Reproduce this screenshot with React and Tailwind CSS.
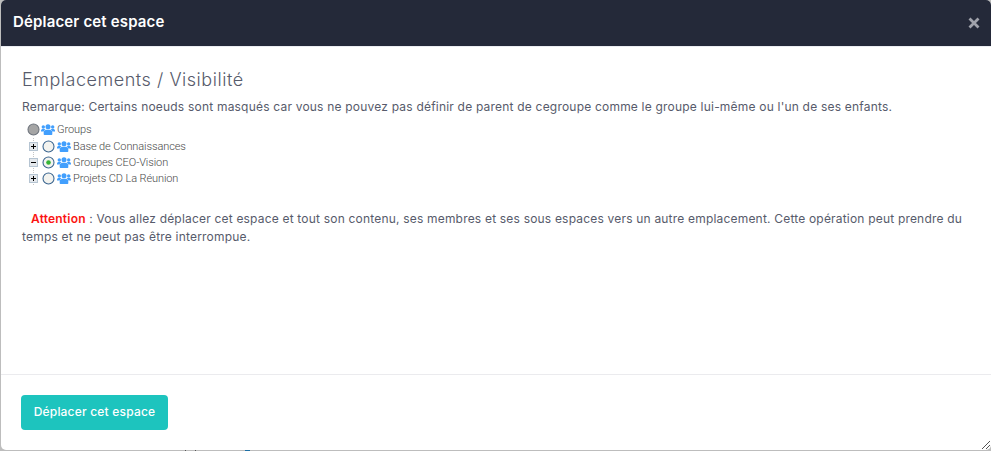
import React from "react";

function UsersIcon() {
  return (
    <svg viewBox="0 0 14 11" className="h-[11px] w-[14px] shrink-0" fill="#429ffd">
      <circle cx="2.3" cy="3" r="1.7" />
      <circle cx="11.7" cy="3" r="1.7" />
      <circle cx="7" cy="2.8" r="2.5" />
      <path d="M0 7.6V6.7C0 5.5.8 5 1.8 5h1.4c.6 0 1 .2 1.3.5C3.500 6 3 6.700 2.800 7.600ZM14 7.600V6.700C14 5.500 13.200 5 12.200 5h-1.400c-.6 0-1 .2-1.300.5 1 .5 1.500 1.200 1.700 2.100Z" />
      <path d="M2.700 9.900V8.600C2.700 6.700 4.200 5.800 5.500 5.800h3c1.300 0 2.800.9 2.800 2.800v1.300c0 .6-.4 1-1 1H3.700c-.6 0-1-.4-1-1Z" />
    </svg>
  );
}

function Radio({ checked, disabled }) {
  return (
    <svg viewBox="0 0 13 13" className="size-[13px] shrink-0">
      <circle cx="6.500" cy="6.500" r="5.500" fill={disabled ? "#a5a5a5" : "#f3f3ef"} stroke={disabled ? "#70767f" : "#3d6791"} strokeWidth="1.100" />
      {checked && <circle cx="6.500" cy="6.500" r="2.300" fill="#36b536" />}
    </svg>
  );
}

function Toggle({ open }) {
  return (
    <svg viewBox="0 0 9 16" className="h-4 w-[9px] shrink-0" shapeRendering="crispEdges">
      <path d="M4.500 0v16" stroke="#c4c4c4" strokeDasharray="1 1" />
      <rect x=".5" y="4.500" width="8" height="8" rx="1" fill="#e4e8ec" stroke="#b5c4d2" />
      <path d={open ? "M2 8.500h5" : "M2 8.500h5M4.500 6v5"} stroke="#000" />
    </svg>
  );
}

function TreeRow({ label, checked, open }) {
  return (
    <li className="flex h-4 items-center">
      <Toggle open={open} />
      <span className="ml-1 flex"><Radio checked={checked} /></span>
      <span className="ml-[2px] flex"><UsersIcon /></span>
      <span className="ml-[2px] pt-px">{label}</span>
    </li>
  );
}

export default function App() {
  return (
    <div className="h-[451px] w-[991px] overflow-hidden bg-[#bdbdbd] pl-px font-['Inter',sans-serif] text-[#575b6b]">
      <section className="relative flex h-[450px] flex-col overflow-hidden rounded-[5px] bg-white">
        <header className="flex h-[46px] shrink-0 items-center justify-between bg-[#242939] pr-[11px] pl-3 text-white">
          <h1 className="-mt-px text-[15px] font-semibold tracking-[0.16px] whitespace-nowrap">Déplacer cet espace</h1>
          <svg viewBox="0 0 12 12" className="size-3" stroke="#a0a2ab" strokeWidth="2.800">
            <path d="M1.500 1.500l9 9M10.500 1.500l-9 9" />
          </svg>
        </header>
        <main className="flex-1 border-t border-[#ebedf2] pt-[21px] pl-5">
          <h2 className="pl-px text-[18px] leading-6 font-light tracking-[0.53px] whitespace-nowrap">Emplacements / Visibilité</h2>
          <p className="mt-[6px] pl-px text-[12px] leading-[18px] tracking-[0.203px] whitespace-nowrap">Remarque: Certains noeuds sont masqués car vous ne pouvez pas définir de parent de cegroupe comme le groupe lui-même ou l'un de ses enfants.</p>
          <div className="mt-[5px] ml-[6px] font-['Roboto',sans-serif] text-[11px] leading-4 font-light tracking-[-0.1px] text-[#484848]">
            <div className="flex h-4 items-center">
              <Radio disabled />
              <span className="ml-px flex"><UsersIcon /></span>
              <span className="ml-[2px] pt-px">Groups</span>
            </div>
            <ul className="mt-px ml-[2px]">
              <TreeRow label="Base de Connaissances" />
              <TreeRow label="Groupes CEO-Vision" checked open />
              <TreeRow label="Projets CD La Réunion" />
            </ul>
          </div>
          <div className="mt-[24px] pl-px text-[12px] leading-[18px] tracking-[0.2px] whitespace-nowrap">
            <p className="pl-[9px]"><span className="font-semibold tracking-[0.2px] text-[#fb1414]">Attention</span><span className="tracking-[0.193px]"> : Vous allez déplacer cet espace et tout son contenu, ses membres et ses sous espaces vers un autre emplacement. Cette opération peut prendre du</span></p>
            <p>temps et ne peut pas être interrompue.</p>
          </div>
        </main>
        <footer className="h-[76px] shrink-0 border-t border-[#ebebee] pt-5 pl-5">
          <button className="flex h-[35px] w-[147px] items-center justify-center rounded bg-[#1dc4be] pb-px text-[12px] font-medium tracking-[0.2px] whitespace-nowrap text-white">Déplacer cet espace</button>
        </footer>
        <svg viewBox="0 0 10 10" className="absolute right-0 bottom-0 size-[10px]" stroke="#555" shapeRendering="crispEdges">
          <path d="M1 9l8-8M5 9l4-4" />
        </svg>
      </section>
      <div className="flex h-px pl-[184px]">
        <span className="w-px bg-[#555]" />
        <span className="ml-[9px] w-px bg-[#555]" />
        <span className="ml-[49px] w-[5px] bg-[#1d6fa5]" />
      </div>
    </div>
  );
}
